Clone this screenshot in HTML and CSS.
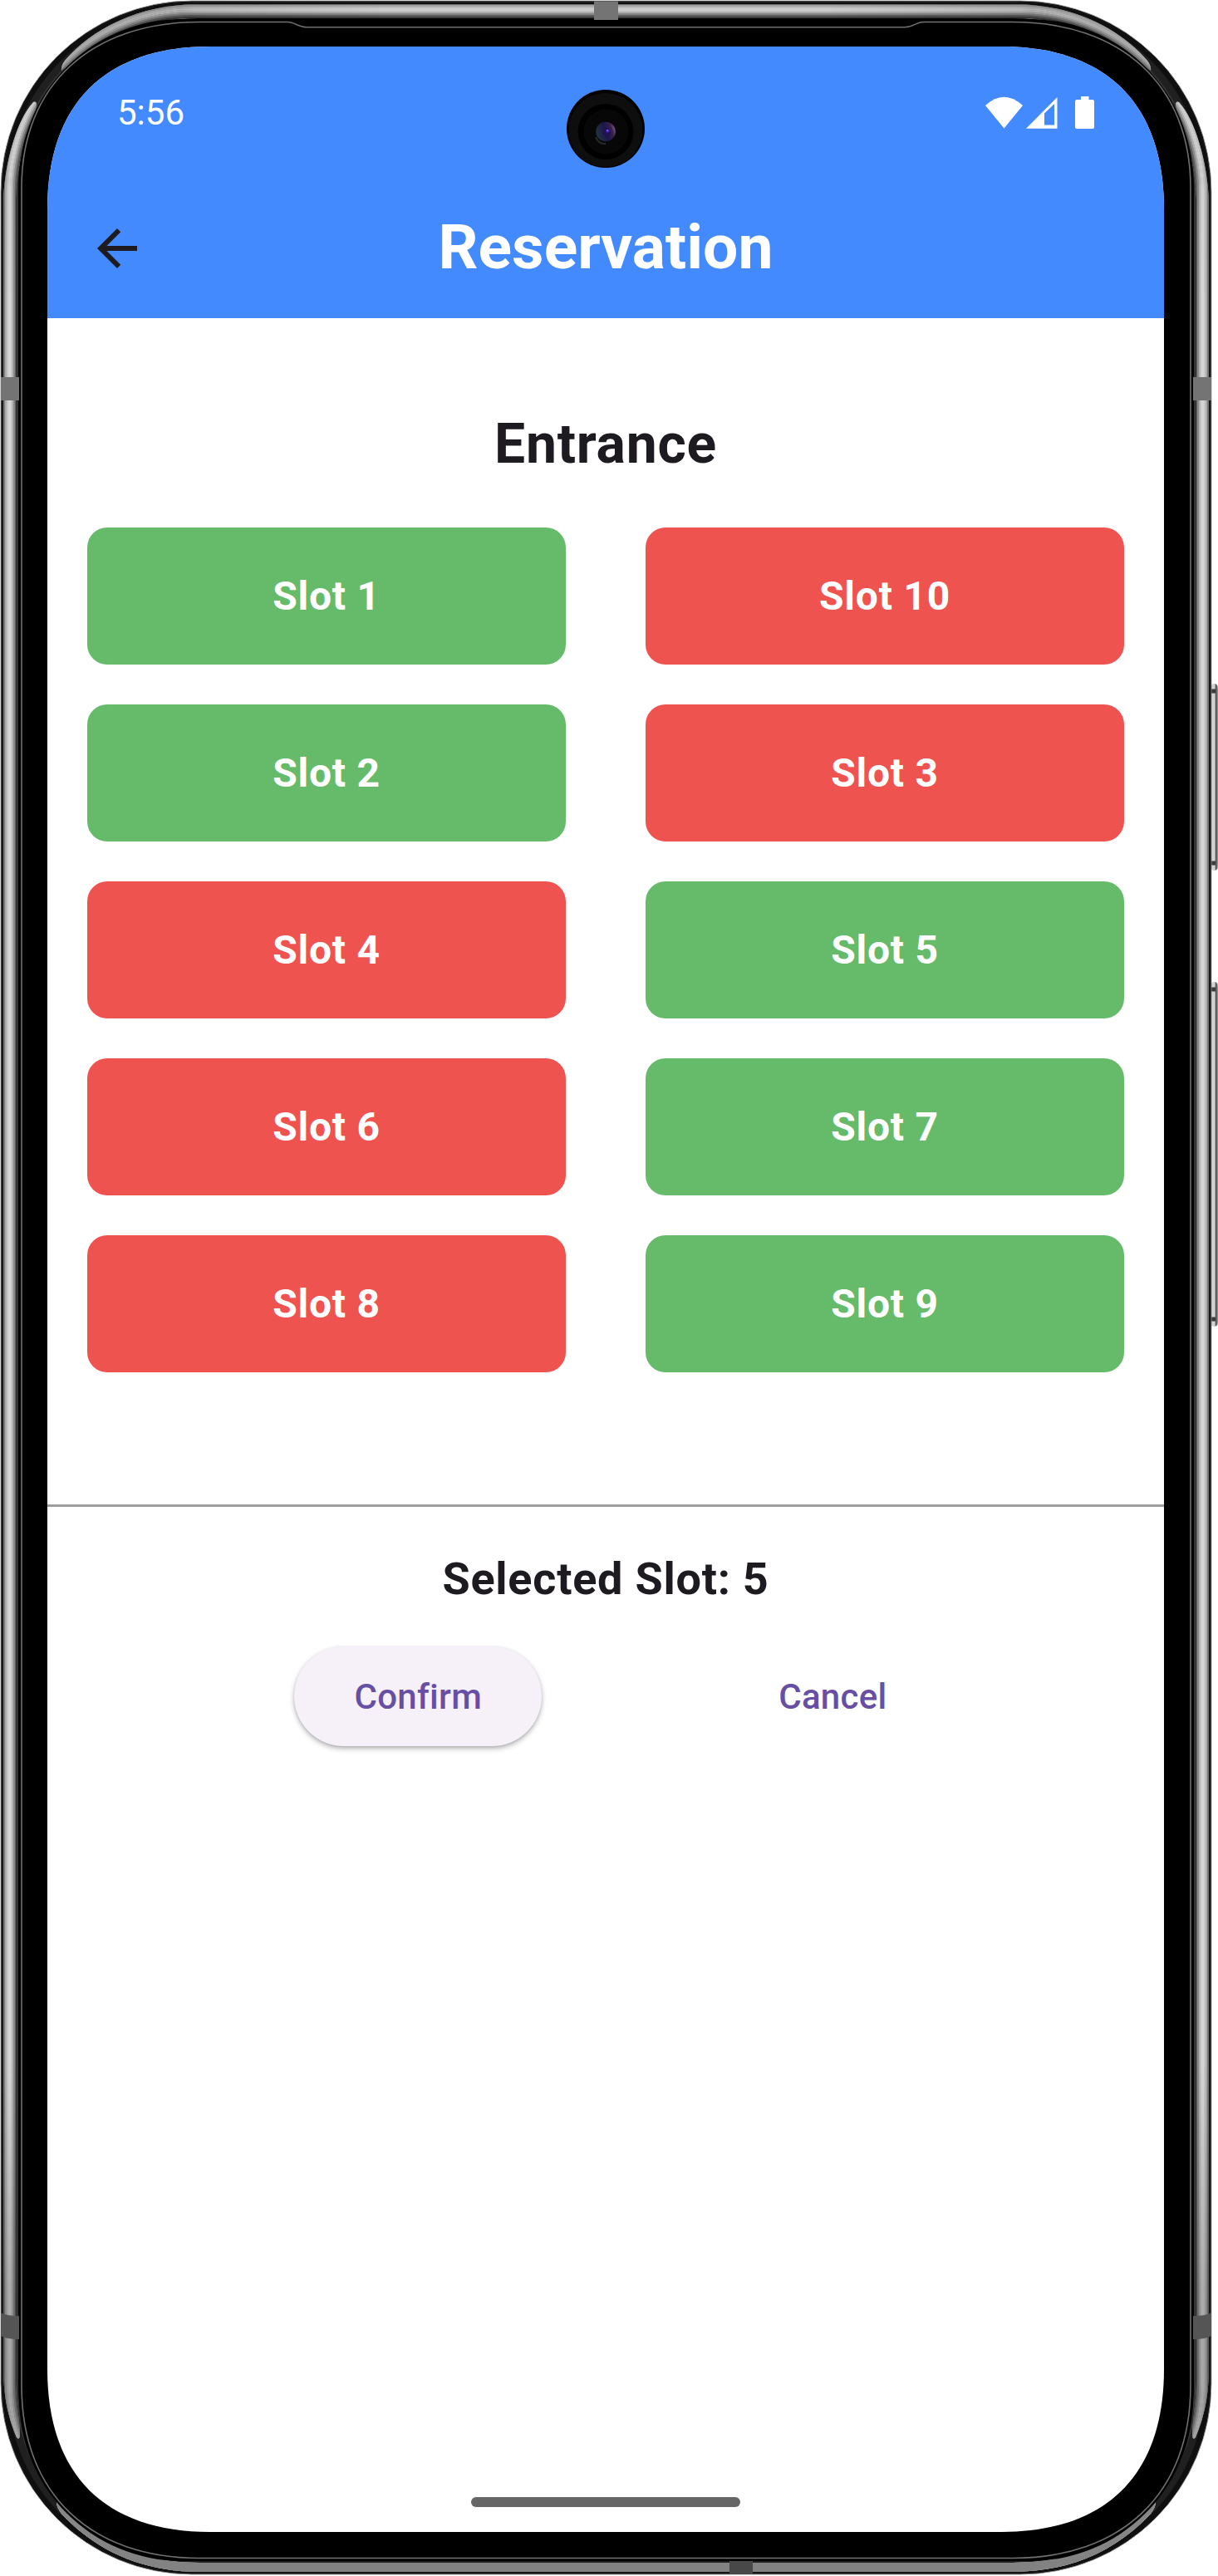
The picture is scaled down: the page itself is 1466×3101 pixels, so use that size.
FILE: index.html
```html
<!DOCTYPE html>
<html lang="en">
<head>
<meta charset="utf-8">
<title>Reservation</title>
<link rel="stylesheet" href="styles.css">
</head>
<body>
<div class="phone">
  <svg class="frame" viewBox="0 0 1466 3101" aria-hidden="true">
    <defs>
      <linearGradient id="key" x1="0" x2="1" y1="0" y2="0">
        <stop offset="0" stop-color="#cfcfcf"/><stop offset=".55" stop-color="#d4d4d4"/><stop offset=".75" stop-color="#444"/><stop offset="1" stop-color="#aaa"/>
      </linearGradient>
      <linearGradient id="shade" x1="0" x2="0" y1="0" y2="1">
        <stop offset="0" stop-color="#000" stop-opacity=".05"/><stop offset=".12" stop-color="#000" stop-opacity="0"/><stop offset=".8" stop-color="#000" stop-opacity="0"/><stop offset=".89" stop-color="#000" stop-opacity=".2"/><stop offset=".97" stop-color="#000" stop-opacity=".24"/><stop offset=".971" stop-color="#000" stop-opacity=".35"/><stop offset="1" stop-color="#000" stop-opacity=".38"/>
      </linearGradient>
      <linearGradient id="topshade" gradientUnits="userSpaceOnUse" x1="60" x2="1399" y1="0" y2="0">
        <stop offset="0" stop-color="#000" stop-opacity=".18"/><stop offset=".3" stop-color="#000" stop-opacity="0"/><stop offset=".7" stop-color="#000" stop-opacity="0"/><stop offset="1" stop-color="#000" stop-opacity=".18"/>
      </linearGradient>
      <clipPath id="lit">
        <path d="M4 240C6 195 20 145 40 123Q44 121 44 126C40 150 20 185 19 240V2865C19 2890 24 2915 24 2932Q23 2938 20 2934C12 2915 4 2890 4 2850Z"/>
        <path d="M1455 240C1453 195 1439 145 1419 123Q1415 121 1415 126C1419 150 1439 185 1440 240V2865C1440 2890 1435 2915 1435 2932Q1436 2938 1439 2934C1447 2915 1455 2890 1455 2850Z"/>
        <path d="M74 85Q73 80 78 73C110 36 165 5 240 5H1219C1294 5 1349 36 1381 73Q1386 80 1385 85C1340 50 1290 22 1219 22H240C169 22 120 50 74 85Z"/>
        <path d="M68 3012Q68 3018 74 3026C115 3070 170 3096 240 3096H1219C1289 3096 1344 3070 1385 3026Q1391 3018 1391 3012C1345 3060 1290 3085 1219 3085H240C169 3085 114 3060 68 3012Z"/>
      </clipPath>
    </defs>
    <rect class="key" x="1457" y="823" width="9" height="225" rx="5"/>
    <rect class="key" x="1457" y="1182" width="9" height="415" rx="5"/>
    <path class="key-end" d="M1458 832H1463M1458 1039H1463M1458 1191H1463M1458 1588H1463"/>
    <rect class="rim" x="1" y="1" width="1457" height="3098" rx="230"/>
    <g fill="none">
      <rect x="2.5" y="2.5" width="1454" height="3095" rx="229" stroke="#222"/>
      <rect x="6" y="6" width="1447" height="3088" rx="225" stroke="#0f0f0f" stroke-width="6"/>
      <rect x="14" y="14" width="1431" height="3072" rx="214" stroke="#202020" stroke-width="10"/>
      <rect x="20" y="20" width="1419" height="3060" rx="207" stroke="#343434" stroke-width="4"/>
    </g>
    <g clip-path="url(#lit)" fill="none" stroke-width="2.2">
      <rect x="0" y="0" width="1466" height="3101" fill="#8a8a8a" stroke="none"/>
      <rect x="5" y="5" width="1449" height="3091" rx="226" stroke="#777"/>
      <rect x="7" y="7" width="1445" height="3087" rx="224" stroke="#aaa"/>
      <rect x="9" y="9" width="1441" height="3083" rx="222" stroke="#c6c6c6"/>
      <rect x="11" y="11" width="1437" height="3079" rx="220" stroke="#d6d6d6"/>
      <rect x="13" y="13" width="1433" height="3075" rx="218" stroke="#d2d2d2"/>
      <rect x="15" y="15" width="1429" height="3071" rx="216" stroke="#b4b4b4"/>
      <rect x="17" y="17" width="1425" height="3067" rx="214" stroke="#8c8c8c"/>
      <rect x="19" y="19" width="1421" height="3063" rx="212" stroke="#606060"/>
      <rect x="21" y="21" width="1417" height="3059" rx="210" stroke="#3d3d3d"/>
      <path d="M68 3000H1391V3101H68Z" fill="#d0d0d0" stroke="none"/>
      <rect x="0" y="0" width="1466" height="3101" fill="url(#shade)" stroke="none"/>
      <rect x="60" y="0" width="1339" height="90" fill="url(#topshade)" stroke="none"/>
    </g>
    <rect x="23" y="23" width="1413" height="3060" rx="196"/>
    <g fill="none" stroke="#707070" stroke-width="1.6">
      <path d="M26 226C26 102 110 26.5 240 26.5H346C355 26.5 359 32.8 370 32.8H1089C1100 32.8 1102 26.5 1111 26.5H1219C1349 26.5 1433 102 1433 226V2872C1433 3003 1349 3079.5 1219 3079.5H240C110 3079.5 26 3003 26 2872Z"/>
    </g>
    <g fill="#747474">
      <path d="M715 1.500H744V24H715Z"/>
      <path d="M1 454H23V482H1ZM1436 454H1458V482H1436Z"/>
    </g>
    <path fill="#555" d="M1 2784Q8 2788 23 2788V2816Q8 2816 1 2812ZM1458 2784Q1451 2788 1436 2788V2816Q1451 2816 1458 2812Z"/>
    <path fill="#484848" d="M878 3083H906V3099H878Z"/>
  </svg>

  <main class="screen">
    <header class="header">
      <div class="status">
        <span class="time">5:56</span>
        <svg class="status-icons" viewBox="0 0 132 40" aria-hidden="true">
          <path d="M0 11Q22.500 -9.500 45 11L22.500 38.500Z"/>
          <path fill-rule="evenodd" d="M49 38.700L86.500 1V38.700ZM71 20.500V34.500H83V9Z"/>
          <path d="M115 0H124.500V4H129Q131 4 131 6V37Q131 39 129 39H110Q108 39 108 37V6Q108 4 110 4H115Z"/>
        </svg>
      </div>
      <div class="bar">
        <svg class="back" viewBox="0 0 24 24" aria-hidden="true"><path d="M20 11H7.830l5.590-5.590L12 4l-8 8 8 8 1.410-1.410L7.830 13H20v-2z"/></svg>
        <h1 class="title">Reservation</h1>
      </div>
      <svg class="camera" viewBox="0 0 96 96" aria-hidden="true">
        <defs>
          <linearGradient id="lens" x1="0" y1=".6" x2="1" y2=".3"><stop offset="0" stop-color="#233440"/><stop offset=".5" stop-color="#1b164a"/><stop offset=".8" stop-color="#3a2049"/><stop offset="1" stop-color="#8c5d91"/></linearGradient>
        </defs>
        <circle cx="48" cy="48" r="47"/>
        <circle cx="48" cy="49.500" r="44.500" fill="#0e0e0e"/>
        <circle cx="48" cy="51.500" r="33.500"/>
        <circle cx="48.500" cy="51.500" r="27" fill="#070707"/>
        <path d="M36 58Q40 67 48 66" fill="none" stroke="#292929" stroke-width="2"/>
        <circle cx="48" cy="51.500" r="11.800" fill="url(#lens)"/>
        <circle cx="49" cy="52" r="5" fill="#201255"/>
        <circle cx="50.500" cy="50.500" r="2" fill="#4528b8"/>
        <circle cx="50" cy="50" r=".8" fill="#aa80ff"/>
      </svg>
    </header>

    <h2 class="entrance">Entrance</h2>
    <section class="slots">
      <div class="slot free">Slot 1</div><div class="slot taken">Slot 10</div>
      <div class="slot free">Slot 2</div><div class="slot taken">Slot 3</div>
      <div class="slot taken">Slot 4</div><div class="slot free">Slot 5</div>
      <div class="slot taken">Slot 6</div><div class="slot free">Slot 7</div>
      <div class="slot taken">Slot 8</div><div class="slot free">Slot 9</div>
    </section>
    <section class="summary">
      <p class="selected">Selected Slot: 5</p>
      <div class="actions">
        <button class="button confirm">Confirm</button>
        <button class="button cancel">Cancel</button>
      </div>
    </section>
    <div class="home"></div>
  </main>
</div>
</body>
</html>
```
FILE: styles.css
```css
* { box-sizing: border-box; }
body {
  margin: 0;
  background: #fff;
  color: #1d1b20;
  font-family: Roboto, sans-serif;
}
.phone {
  position: relative;
  width: 1466px;
  height: 3101px;
  padding: 56px 65px 53px 57px;
  overflow: hidden;
}
.frame {
  position: absolute;
  inset: 0;
  width: 1466px;
  height: 3101px;
}
.rim { fill: #000; stroke: #9a9a9a; stroke-width: .8; }
.key { fill: url(#key); }
.key-end { stroke: #3a3a3a; stroke-width: 5; }
.screen {
  position: relative;
  display: flex;
  flex-direction: column;
  width: 1344px;
  height: 2992px;
  clip-path: path("M0 196C0 69 69 0 196 0H1148C1275 0 1344 69 1344 196V2796C1344 2923 1275 2992 1148 2992H196C69 2992 0 2923 0 2796Z");
  background: #fff;
}
.header {
  position: relative;
  height: 327px;
  background: #448aff;
  color: #fff;
}
.status {
  display: flex;
  align-items: center;
  justify-content: space-between;
  height: 159px;
  padding: 0 83px 0 84px;
}
.time { font-size: 42px; line-height: 50px; }
.status-icons { width: 132px; height: 40px; fill: #fff; }
.camera {
  position: absolute;
  top: 51px;
  left: 624px;
  width: 96px;
  height: 96px;
}
.bar {
  display: grid;
  grid-template-columns: 72px 1fr 72px;
  align-items: center;
  height: 168px;
  padding: 0 48px;
}
.back { width: 72px; height: 72px; margin-top: -1px; fill: #1d1b20; }
.title {
  margin: -4px 0 0;
  font-size: 75px;
  line-height: 90px;
  font-weight: 700;
  text-align: center;
}
.entrance {
  margin: 112px 0 60px;
  font-size: 66px;
  line-height: 80px;
  font-weight: 700;
  letter-spacing: .75px;
  text-align: center;
}
.slots {
  display: grid;
  grid-template-columns: 1fr 1fr;
  gap: 48px 96px;
  padding: 0 48px;
}
.slot {
  display: flex;
  align-items: center;
  justify-content: center;
  height: 165px;
  border-radius: 24px;
  color: #fff;
  font-size: 48px;
  font-weight: 700;
  letter-spacing: .75px;
}
.free { background: #66bb6a; }
.taken { background: #ef5350; }
.summary {
  margin-top: 159px;
  padding-top: 48px;
  border-top: 3px solid #9e9e9e;
}
.selected {
  margin: 0;
  font-size: 54px;
  line-height: 77px;
  font-weight: 700;
  letter-spacing: .75px;
  text-align: center;
}
.actions {
  display: flex;
  justify-content: center;
  gap: 249px;
  margin-top: 43px;
}
.button {
  height: 120px;
  padding: 0 72px;
  border: 0;
  border-radius: 60px;
  background: none;
  color: #6750a4;
  font: 500 42px Roboto, sans-serif;
  letter-spacing: .3px;
}
.confirm {
  background: #f6f1f9;
  box-shadow: 0 3px 6px rgba(0, 0, 0, .28), 0 1px 3px rgba(0, 0, 0, .1);
}
.cancel { padding: 0 36px; }
.home {
  width: 324px;
  height: 12px;
  margin: auto auto 30px;
  border-radius: 6px;
  background: #666;
}
```
